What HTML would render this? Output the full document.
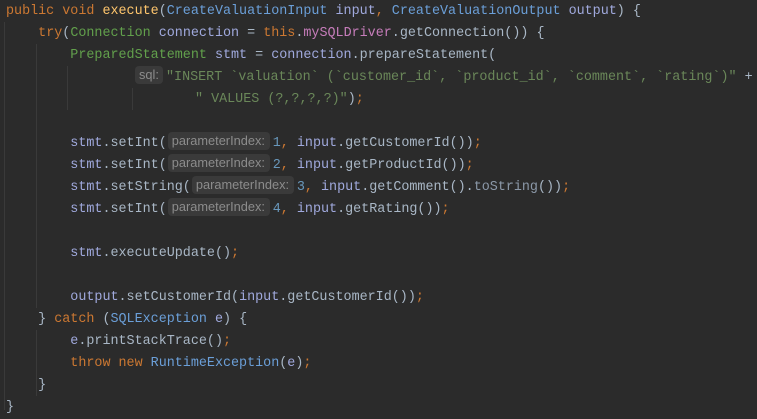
<!DOCTYPE html>
<html><head><style>
body{margin:0;background:#2b2b2b;width:757px;height:419px;overflow:hidden;position:relative}
.l{position:absolute;left:6px;height:22px;line-height:22px;font-family:"Liberation Mono",monospace;font-size:13.4px;color:#a9b7c6;white-space:pre}
.k{color:#cc7832}.m{color:#ffc66d}.t{color:#6b9fd8}.g{color:#62a04c}.v{color:#a0a9dd}.f{color:#c77dbb}.s{color:#6a8759}.n{color:#6897bb}.p{color:#a9b7c6}
.h{display:inline-block;font-family:"Liberation Sans",sans-serif;font-size:12.8px;color:#8c8c8c;background:#3a3a3a;border-radius:4px;height:18px;line-height:18px;vertical-align:middle;box-sizing:border-box;padding-left:4px;margin:0 3px 0 1px;position:relative;top:-1px;overflow:hidden}
.gd{position:absolute;width:1px;background:#3a3a3a}
</style></head><body>
<div class="gd" style="left:4px;top:22px;height:388px"></div>
<div class="gd" style="left:36px;top:44px;height:264px"></div>
<div class="gd" style="left:67px;top:66px;height:44px"></div>
<div class="gd" style="left:36px;top:330px;height:66px"></div>
<div class="gd" style="left:132px;top:88px;height:22px"></div>

<div class="l" style="top:1px"><span class="k">public void </span><span class="m">execute</span>(<span class="t">CreateValuationInput</span> <span class="v">input</span><span class="k">,</span> <span class="t">CreateValuationOutput</span> <span class="v">output</span>) {</div>
<div class="l" style="top:23px">    <span class="k">try</span>(<span class="g">Connection</span> <span class="v">connection</span> = <span class="k">this</span>.<span class="f">mySQLDriver</span>.getConnection()) {</div>
<div class="l" style="top:45px">        <span class="g">PreparedStatement</span> <span class="v">stmt</span> = <span class="v">connection</span>.prepareStatement(</div>
<div class="l" style="top:67px;left:134px"><span class="h" style="width:28px">sql:</span><span class="s">"INSERT `valuation` (`customer_id`, `product_id`, `comment`, `rating`)"</span> +</div>
<div class="l" style="top:89px;left:195px"><span class="s">" VALUES (?,?,?,?)"</span>)<span class="k">;</span></div>
<div class="l" style="top:133px">        <span class="v">stmt</span>.setInt(<span class="h" style="width:102px">parameterIndex:</span><span class="n">1</span><span class="k">,</span> <span class="v">input</span>.getCustomerId())<span class="k">;</span></div>
<div class="l" style="top:155px">        <span class="v">stmt</span>.setInt(<span class="h" style="width:102px">parameterIndex:</span><span class="n">2</span><span class="k">,</span> <span class="v">input</span>.getProductId())<span class="k">;</span></div>
<div class="l" style="top:177px">        <span class="v">stmt</span>.setString(<span class="h" style="width:102px">parameterIndex:</span><span class="n">3</span><span class="k">,</span> <span class="v">input</span>.getComment().<span class="p" style="color:#8b98a8">toString</span>())<span class="k">;</span></div>
<div class="l" style="top:199px">        <span class="v">stmt</span>.setInt(<span class="h" style="width:102px">parameterIndex:</span><span class="n">4</span><span class="k">,</span> <span class="v">input</span>.getRating())<span class="k">;</span></div>
<div class="l" style="top:243px">        <span class="v">stmt</span>.executeUpdate()<span class="k">;</span></div>
<div class="l" style="top:287px">        <span class="v">output</span>.setCustomerId(<span class="v">input</span>.getCustomerId())<span class="k">;</span></div>
<div class="l" style="top:309px">    } <span class="k">catch</span> (<span class="t">SQLException</span> <span class="v">e</span>) {</div>
<div class="l" style="top:331px">        <span class="v">e</span>.printStackTrace()<span class="k">;</span></div>
<div class="l" style="top:353px">        <span class="k">throw new </span><span class="t">RuntimeException</span>(<span class="v">e</span>)<span class="k">;</span></div>
<div class="l" style="top:375px">    }</div>
<div class="l" style="top:397px">}</div>
</body></html>
